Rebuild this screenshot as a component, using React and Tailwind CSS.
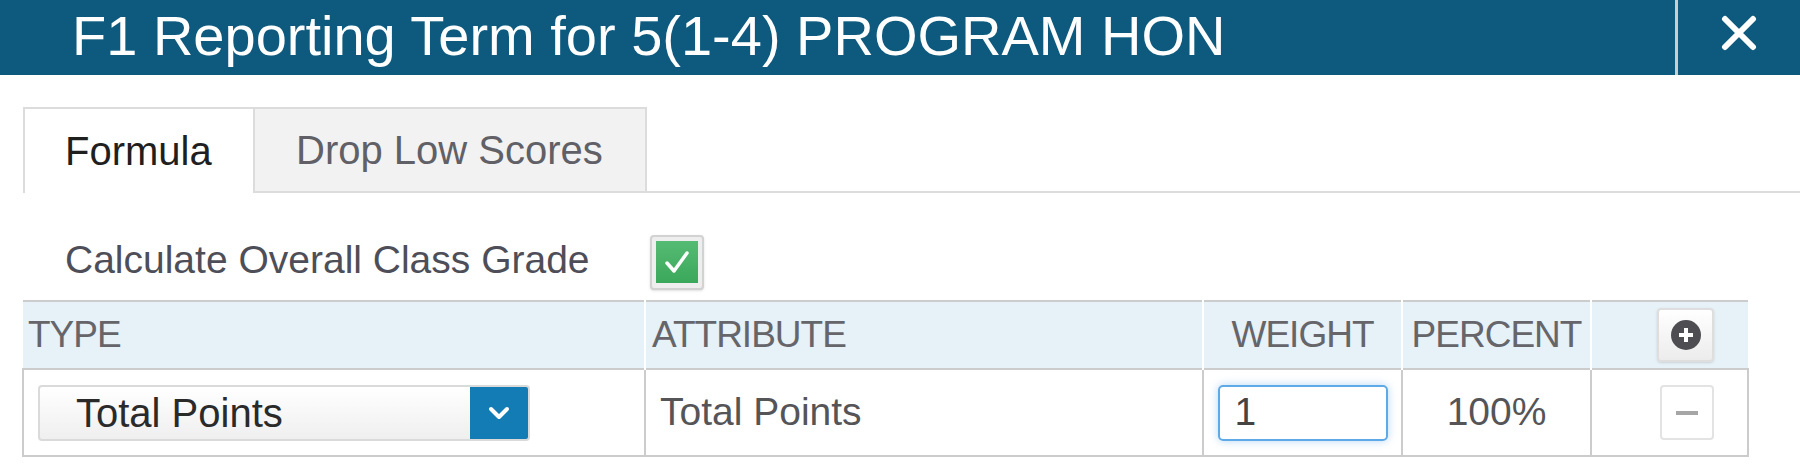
import React from 'react';

const font = { fontFamily: '"Liberation Sans", Arial, sans-serif' };

const CloseIcon = () => (
    <svg width="36" height="36" viewBox="0 0 36 36">
        <path d="M4 4 L32 32 M32 4 L4 32" stroke="white" strokeWidth="6" strokeLinecap="round" />
    </svg>
);

const CheckIcon = () => (
    <svg width="30" height="30" viewBox="0 0 30 30">
        <path d="M5 16 L12 24 L25 6" stroke="white" strokeWidth="3.5" fill="none" strokeLinecap="round" strokeLinejoin="round" />
    </svg>
);

const PlusCircle = () => (
    <svg width="30" height="30" viewBox="0 0 30 30">
        <circle cx="15" cy="15" r="15" fill="#4d4d52" />
        <path d="M15 8 V22 M8 15 H22" stroke="white" strokeWidth="4" />
    </svg>
);

const Chevron = () => (
    <svg width="22" height="14" viewBox="0 0 22 14">
        <path d="M3 3 L11 11 L19 3" stroke="white" strokeWidth="4" fill="none" strokeLinecap="round" strokeLinejoin="round" />
    </svg>
);

const App = () => {
    return (
        <div className="w-[1800px] h-[470px] bg-white overflow-hidden" style={font}>
            {/* title bar */}
            <div className="h-[75px] bg-[#0d5a7e] flex items-stretch">
                <div className="flex-1 flex items-center pl-[72px] text-white text-[56px] leading-none pb-[4px]">
                    F1 Reporting Term for 5(1-4) PROGRAM HON
                </div>
                <div className="w-[3px] bg-[#c9cdd0]" />
                <div className="w-[122px] flex items-center justify-center pb-[9px]">
                    <CloseIcon />
                </div>
            </div>

            {/* tabs */}
            <div className="ml-[23px] mt-[32px] flex border-b-2 border-[#dcdcdc] h-[86px]">
                <div className="w-[232px] -mb-[2px] bg-white border-2 border-b-0 border-[#dcdcdc] flex items-center pl-[40px] text-[40px] text-[#1f1f1f]">
                    Formula
                </div>
                <div className="w-[392px] -mb-[2px] bg-[#f2f2f2] border-2 border-l-0 border-[#dcdcdc] flex items-center pl-[41px] text-[40px] text-[#606066]">
                    Drop Low Scores
                </div>
            </div>

            {/* calculate overall */}
            <div className="flex items-center mt-[41px] h-[56px]">
                <div className="w-[650px] pl-[65px] text-[39px] text-[#4e4e58] leading-none pb-[6px]">
                    Calculate Overall Class Grade
                </div>
                <div className="w-[54px] h-[55px] rounded-[4px] border-2 border-[#d2d2d2] bg-[#eeeeee] flex items-center justify-center shadow-sm">
                    <div className="w-[42px] h-[42px] bg-gradient-to-b from-[#55bb74] to-[#3aa85a] flex items-center justify-center">
                        <CheckIcon />
                    </div>
                </div>
            </div>

            {/* formula table */}
            <table className="ml-[22px] mt-[10px] w-[1725px] table-fixed border-collapse">
                <colgroup>
                    <col className="w-[622px]" />
                    <col className="w-[558px]" />
                    <col className="w-[199px]" />
                    <col className="w-[189px]" />
                    <col className="w-[157px]" />
                </colgroup>
                <thead>
                    <tr className="h-[68px] bg-[#e6f1f8] border-t-2 border-b-2 border-[#cccccc] text-[37px] text-[#65656a] tracking-[-1px]">
                        <th className="font-normal text-left pl-[5px] border-r-2 border-white">TYPE</th>
                        <th className="font-normal text-left pl-[6px] border-r-2 border-white">ATTRIBUTE</th>
                        <th className="font-normal text-center border-r-2 border-white">WEIGHT</th>
                        <th className="font-normal text-center border-r-2 border-white">PERCENT</th>
                        <th className="text-left pl-[65px]">
                            <div className="w-[57px] h-[54px] rounded-[4px] border-2 border-[#dedede] bg-gradient-to-b from-white to-[#ececec] shadow-sm flex items-center justify-center">
                                <PlusCircle />
                            </div>
                        </th>
                    </tr>
                </thead>
                <tbody>
                    <tr className="h-[87px] border-2 border-t-0 border-[#cccccc] text-[39px] text-[#555558]">
                        <td className="pl-[14px] border-r-2 border-[#cccccc]">
                            <div className="w-[492px] h-[56px] flex rounded-[4px] border-2 border-[#dadada] bg-gradient-to-b from-white to-[#efefef] overflow-hidden">
                                <div className="flex-1 flex items-center pl-[36px] text-[#2a2a2a] text-[40px]">Total Points</div>
                                <div className="w-[58px] bg-[#137cb4] flex items-center justify-center">
                                    <Chevron />
                                </div>
                            </div>
                        </td>
                        <td className="pl-[14px] border-r-2 border-[#cccccc]">Total Points</td>
                        <td className="border-r-2 border-[#cccccc]">
                            <div className="mx-auto w-[170px] h-[56px] rounded-[5px] border-2 border-[#5ea9e8] shadow-[0_0_8px_rgba(94,169,232,0.45)] flex items-center pl-[15px] text-[#444]">
                                1
                            </div>
                        </td>
                        <td className="text-center border-r-2 border-[#cccccc]">100%</td>
                        <td className="pl-[68px]">
                            <div className="w-[54px] h-[55px] rounded-[4px] border-2 border-[#e3e3e3] bg-white flex items-center justify-center">
                                <div className="w-[22px] h-[4px] bg-[#a6a6a6]" />
                            </div>
                        </td>
                    </tr>
                </tbody>
            </table>
        </div>
    );
};

export default App;
